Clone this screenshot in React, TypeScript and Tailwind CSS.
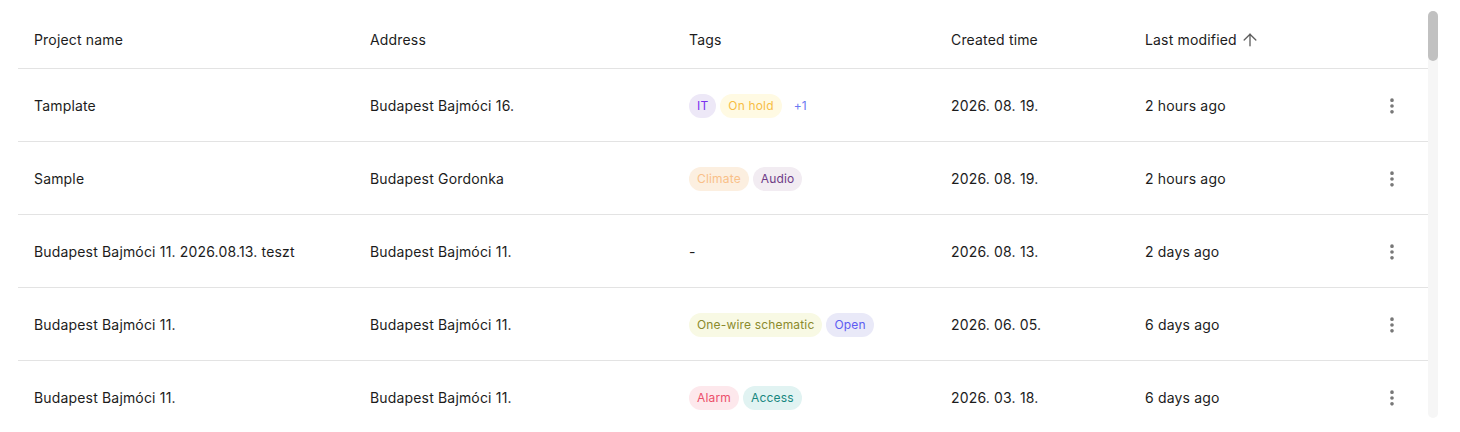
import React from "react";
import { ArrowUp, EllipsisVertical } from "lucide-react";

const tagStyles: Record<string, string> = {
  IT: "bg-[#ede8f7] text-[#7b2ff0]",
  "On hold": "bg-[#fffae3] text-[#f7bd45]",
  Climate: "bg-[#fcefe0] text-[#f9c089]",
  Audio: "bg-[#f2ecf2] text-[#6e3a86]",
  "One-wire schematic": "bg-[#f8f9e4] text-[#8b8a2c]",
  Open: "bg-[#e9e9f8] text-[#5c5cf2]",
  Alarm: "bg-[#fde8ec] text-[#ec4f6b]",
  Access: "bg-[#e1f3f2] text-[#17877f]",
};

const rows = [
  { name: "Tamplate", address: "Budapest Bajmóci 16.", tags: ["IT", "On hold"], more: 1, created: "2026. 08. 19.", modified: "2 hours ago" },
  { name: "Sample", address: "Budapest Gordonka", tags: ["Climate", "Audio"], more: 0, created: "2026. 08. 19.", modified: "2 hours ago" },
  { name: "Budapest Bajmóci 11. 2026.08.13. teszt", address: "Budapest Bajmóci 11.", tags: [], more: 0, created: "2026. 08. 13.", modified: "2 days ago" },
  { name: "Budapest Bajmóci 11.", address: "Budapest Bajmóci 11.", tags: ["One-wire schematic", "Open"], more: 0, created: "2026. 06. 05.", modified: "6 days ago" },
  { name: "Budapest Bajmóci 11.", address: "Budapest Bajmóci 11.", tags: ["Alarm", "Access"], more: 0, created: "2026. 03. 18.", modified: "6 days ago" },
];

const cols = "grid grid-cols-[336px_319px_262px_194px_227px_72px]";

const Chip = ({ label }: { label: string }) => (
  <span className={`flex h-6 items-center rounded-full px-2 text-xs ${tagStyles[label]}`}>
    {label}
  </span>
);

const App = () => {
  return (
    <div
      className="flex h-[432px] w-full overflow-hidden bg-white text-sm tracking-[0.012em] text-[#1c1c1c]"
      style={{ fontFamily: "Inter, 'Noto Sans', sans-serif" }}
    >
      <div className="ml-[18px] w-[1410px] shrink-0">
        {/* Header */}
        <div className={`${cols} h-[69px] items-center border-b border-[#e3e3e3] pt-[12px]`}>
          <div className="pl-4">Project name</div>
          <div className="pl-4">Address</div>
          <div className="pl-4">Tags</div>
          <div className="pl-4">Created time</div>
          <div className="flex items-center gap-[3px] pl-4">
            Last modified
            <ArrowUp size={20} strokeWidth={1.6} className="text-[#5f5f5f]" />
          </div>
          <div />
        </div>

        {/* Rows */}
        {rows.map((row, idx) => (
          <div key={idx} className={`${cols} h-[73px] items-center border-b border-[#e3e3e3] pt-[2px]`}>
            <div className="pl-4">{row.name}</div>
            <div className="pl-4">{row.address}</div>
            <div className="flex items-center gap-1 pl-4">
              {row.tags.length === 0 ? (
                <span>-</span>
              ) : (
                row.tags.map((t) => <Chip key={t} label={t} />)
              )}
              {row.more > 0 && (
                <span className="px-2 text-xs text-[#6a78f2]">+{row.more}</span>
              )}
            </div>
            <div className="pl-4">{row.created}</div>
            <div className="pl-4">{row.modified}</div>
            <div className="flex justify-center">
              <EllipsisVertical size={20} strokeWidth={2.4} className="text-[#767676]" />
            </div>
          </div>
        ))}
      </div>

      {/* Scrollbar */}
      <div className="mt-[11px] h-[407px] w-[10px] shrink-0 rounded-full bg-[#f6f6f6]">
        <div className="h-[50px] w-full rounded-full bg-[#c1c1c1]" />
      </div>
    </div>
  );
};

export default App;
